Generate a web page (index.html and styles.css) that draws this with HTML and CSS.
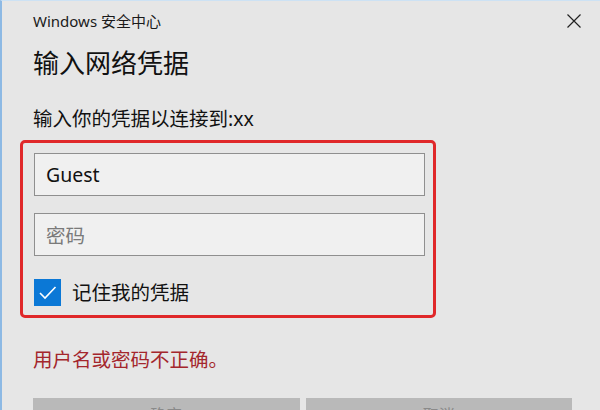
FILE: index.html
```html
<!DOCTYPE html>
<html lang="zh-CN">
<head>
<meta charset="utf-8">
<title>Windows 安全中心</title>
<link rel="stylesheet" href="styles.css">
</head>
<body>
<div class="dialog">
  <div class="titlebar">
    <span class="app-name">Windows 安全中心</span>
    <span class="close" aria-label="关闭">
      <svg width="14" height="14" viewBox="0 0 14 14"><path d="M0.5 0.5 L13.5 13.5 M13.5 0.5 L0.5 13.5" stroke="#222" stroke-width="1.2" fill="none"/></svg>
    </span>
  </div>
  <div class="content">
    <h1 class="heading">输入网络凭据</h1>
    <p class="subtitle">输入你的凭据以连接到:xx</p>
    <div class="highlight">
      <div class="field"><span class="value">Guest</span></div>
      <div class="field gap"><span class="placeholder">密码</span></div>
      <label class="remember">
        <span class="checkbox">
          <svg width="27" height="27" viewBox="0 0 27 27"><path d="M6 14 L11 19 L21.5 8" stroke="#fff" stroke-width="1.6" fill="none"/></svg>
        </span>
        <span class="remember-text">记住我的凭据</span>
      </label>
    </div>
    <p class="error">用户名或密码不正确。</p>
    <div class="buttons">
      <div class="btn">确定</div>
      <div class="btn">取消</div>
    </div>
  </div>
</div>
</body>
</html>
```

FILE: styles.css
```css
html, body {
  margin: 0;
  padding: 0;
  height: 100%;
  overflow: hidden;
}
body {
  background: #e6e6e6;
  font-family: "Noto Sans", "Noto Sans CJK SC", sans-serif;
  color: #111;
}
.dialog {
  box-sizing: border-box;
  height: 410px;
  border-left: 2px solid #8db9e4;
  border-top: 1px solid #cde2f4;
  overflow: hidden;
}
.titlebar {
  display: flex;
  justify-content: space-between;
  align-items: flex-start;
  padding: 10px 19px 0 31px;
  height: 21px;
}
.app-name {
  font-size: 15px;
  line-height: 20px;
  color: #1a1a1a;
}
.close {
  display: flex;
  margin-top: 3px;
}
.content {
  padding-left: 31px;
}
.heading {
  margin: 14px 0 0;
  font-size: 26px;
  font-weight: normal;
  line-height: 34px;
  color: #111;
}
.subtitle {
  margin: 25px 0 0;
  font-size: 19.5px;
  line-height: 28px;
  color: #111;
}
.highlight {
  box-sizing: border-box;
  width: 416px;
  margin: 7px 0 0 -13px;
  border: 3px solid #e0282a;
  border-radius: 5px;
  padding: 10px 8px 9px 11px;
}
.field {
  box-sizing: border-box;
  height: 43px;
  border: 1px solid #8f8f8f;
  background: #f0f0f0;
  display: flex;
  align-items: center;
  padding-left: 11px;
  font-size: 19.5px;
}
.field.gap {
  margin-top: 17px;
}
.value {
  color: #111;
}
.placeholder {
  color: #7a7a7a;
}
.remember {
  display: flex;
  align-items: center;
  gap: 11px;
  margin-top: 23px;
}
.checkbox {
  width: 27px;
  height: 27px;
  background: #0b78d6;
  display: flex;
}
.remember-text {
  font-size: 19.5px;
  line-height: 27px;
  color: #111;
}
.error {
  margin: 28px 0 0;
  font-size: 19.5px;
  line-height: 28px;
  color: #a4262c;
}
.buttons {
  display: flex;
  gap: 6px;
  margin-top: 24px;
  width: 539px;
}
.btn {
  flex: 1;
  height: 32px;
  background: #b9b9b9;
  color: #8a8a8a;
  font-size: 16px;
  display: flex;
  align-items: center;
  justify-content: center;
}
```
